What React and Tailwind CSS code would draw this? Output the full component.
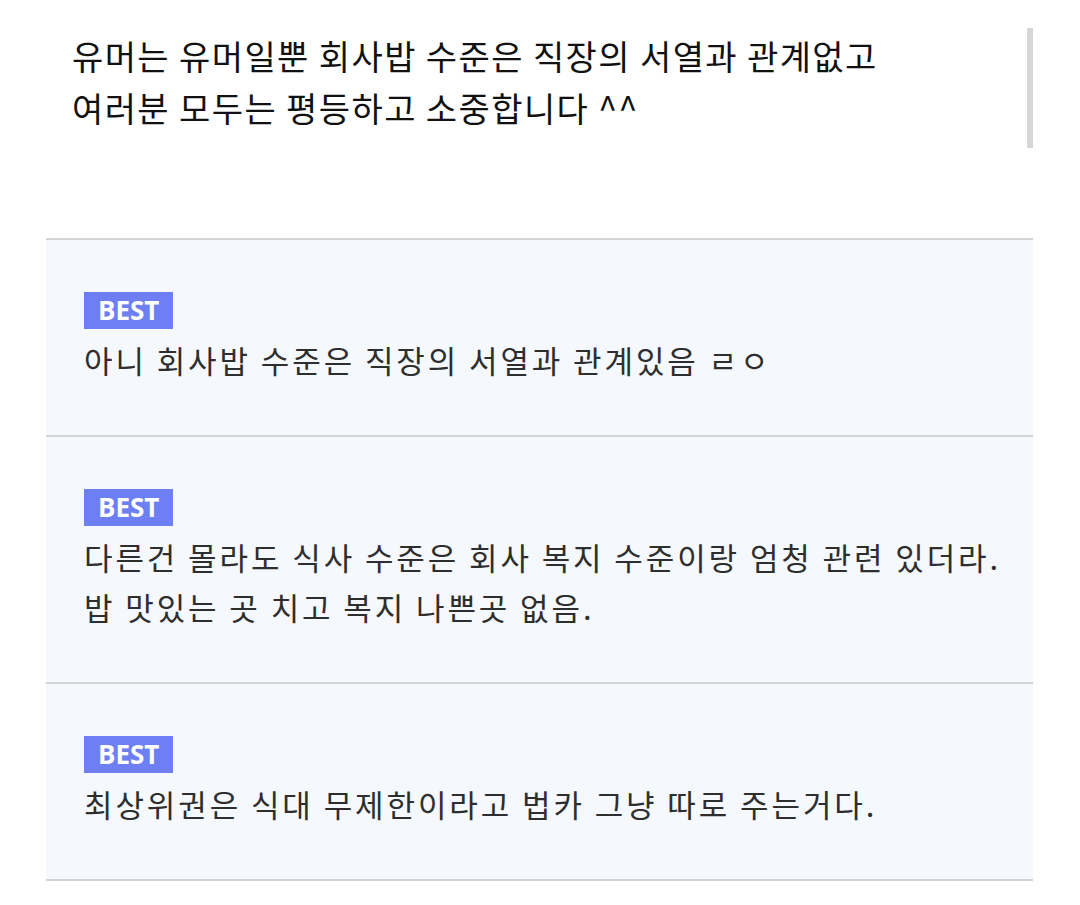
const comments = [
  { lines: ['아니 회사밥 수준은 직장의 서열과 관계있음 ㄹㅇ'] },
  { lines: ['다른건 몰라도 식사 수준은 회사 복지 수준이랑 엄청 관련 있더라.', '밥 맛있는 곳 치고 복지 나쁜곳 없음.'] },
  { lines: ['최상위권은 식대 무제한이라고 법카 그냥 따로 주는거다.'] },
];

function BestComment({ lines }) {
  return (
    <div className="border-b-2 border-[#d4d4d4] pl-[38px] pr-[4px] pt-[52px] pb-[50px]">
      <span className="inline-block bg-[#6e7ff3] px-[14px] py-[1px] text-[26px] font-bold leading-[35px] text-white [font-family:'Open_Sans',sans-serif]">
        BEST
      </span>
      <div className="mt-[6px] whitespace-nowrap text-[31px] leading-[50px] tracking-[2.9px] text-[#2e2e2e]">
        {lines.map((l) => (
          <p key={l}>{l}</p>
        ))}
      </div>
    </div>
  );
}

export default function App() {
  return (
    <div className="min-h-[905px] bg-white [font-family:'Noto_Sans_CJK_KR',sans-serif]">
      <div className="relative ml-[46px] w-[987px]">
        <div className="absolute right-0 top-[28px] h-[120px] w-[6px] bg-[#d6d6d6]" />
        <div className="px-[26px] pt-[30px] text-[34px] leading-[52px] tracking-[1.4px] text-[#111]">
          <p>유머는 유머일뿐 회사밥 수준은 직장의 서열과 관계없고</p>
          <p>여러분 모두는 평등하고 소중합니다 ^^</p>
        </div>
        <div className="mt-[104px] border-t-2 border-[#d4d4d4] bg-[#f5f8fd]">
          {comments.map((c, i) => (
            <BestComment key={i} lines={c.lines} />
          ))}
        </div>
      </div>
    </div>
  );
}
